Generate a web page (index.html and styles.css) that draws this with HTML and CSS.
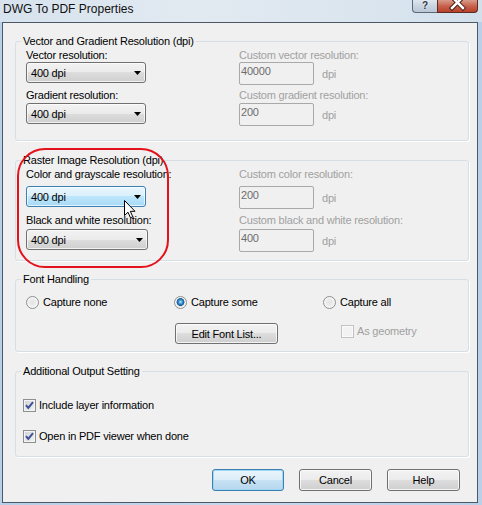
FILE: index.html
```html
<!DOCTYPE html>
<html lang="en">

<head>
    <meta charset="UTF-8" />
    <title>DWG To PDF Properties</title>
    <link rel="stylesheet" href="styles.css">
</head>

<body>
    <div class="window">
        <div class="titlebar">
            <span class="title">DWG To PDF Properties</span>
            <div class="caption">
                <span class="cap-help">?</span>
                <span class="cap-close">
                    <svg width="41" height="13" viewBox="0 0 41 13">
                        <path d="M15 -3 L26 8 M26 -3 L15 8" stroke="#4a1c14" stroke-width="4.5" stroke-linecap="square" />
                        <path d="M15 -3 L26 8 M26 -3 L15 8" stroke="#ffffff" stroke-width="2.5" stroke-linecap="square" />
                    </svg>
                </span>
            </div>
        </div>

        <div class="client">
            <!-- vector / gradient -->
            <fieldset class="group g-vector">
                <legend>Vector and Gradient Resolution (dpi)</legend>
                <div class="res-body pb-14">
                    <div class="res-row lg-0">
                        <div class="field">
                            <label>Vector resolution:</label>
                            <div class="combo"><span>400 dpi</span><i class="arrow"></i></div>
                        </div>
                        <div class="field off">
                            <label>Custom vector resolution:</label>
                            <div class="custom"><span class="textbox">40000</span><span class="unit">dpi</span></div>
                        </div>
                    </div>
                    <div class="res-row lg-1 mt-3">
                        <div class="field">
                            <label>Gradient resolution:</label>
                            <div class="combo"><span>400 dpi</span><i class="arrow"></i></div>
                        </div>
                        <div class="field off">
                            <label>Custom gradient resolution:</label>
                            <div class="custom"><span class="textbox">200</span><span class="unit">dpi</span></div>
                        </div>
                    </div>
                </div>
            </fieldset>

            <!-- raster -->
            <fieldset class="group g-raster">
                <legend>Raster Image Resolution (dpi)</legend>
                <div class="res-body pb-8">
                    <div class="res-row lg-5">
                        <div class="field">
                            <label>Color and grayscale resolution:</label>
                            <div class="combo focus"><span>400 dpi</span><i class="arrow"></i></div>
                        </div>
                        <div class="field off">
                            <label>Custom color resolution:</label>
                            <div class="custom"><span class="textbox">200</span><span class="unit">dpi</span></div>
                        </div>
                    </div>
                    <div class="res-row lg-2 mt-4">
                        <div class="field">
                            <label>Black and white resolution:</label>
                            <div class="combo wide"><span>400 dpi</span><i class="arrow"></i></div>
                        </div>
                        <div class="field off">
                            <label>Custom black and white resolution:</label>
                            <div class="custom"><span class="textbox">400</span><span class="unit">dpi</span></div>
                        </div>
                    </div>
                </div>
            </fieldset>

            <!-- fonts -->
            <fieldset class="group g-font">
                <legend>Font Handling</legend>
                <div class="font-body">
                    <div class="font-row">
                        <div class="opt"><i class="radio"></i><span>Capture none</span></div>
                        <div class="opt"><i class="radio on"></i><span>Capture some</span></div>
                        <div class="opt"><i class="radio"></i><span>Capture all</span></div>
                    </div>
                    <div class="font-row second">
                        <div></div>
                        <div><button class="btn edit">Edit Font List...</button></div>
                        <div class="opt geo off"><i class="check"></i><span>As geometry</span></div>
                    </div>
                </div>
            </fieldset>

            <!-- output -->
            <fieldset class="group g-output">
                <legend>Additional Output Setting</legend>
                <div class="out-body">
                    <div class="opt"><i class="check on"><svg width="11" height="11" viewBox="0 0 11 11"><path d="M2 5.2 L4.3 8 L9 2.2" fill="none" stroke="#3e5295" stroke-width="2" /></svg></i><span>Include layer information</span></div>
                    <div class="opt"><i class="check on"><svg width="11" height="11" viewBox="0 0 11 11"><path d="M2 5.2 L4.3 8 L9 2.2" fill="none" stroke="#3e5295" stroke-width="2" /></svg></i><span>Open in PDF viewer when done</span></div>
                </div>
            </fieldset>

            <div class="actions">
                <button class="btn default">OK</button>
                <button class="btn">Cancel</button>
                <button class="btn">Help</button>
            </div>
        </div>

        <!-- red marker and mouse pointer drawn over the dialog -->
        <div class="marker"></div>
        <svg class="pointer" width="13" height="19" viewBox="0 0 13 19">
            <path d="M0.5 0.5 L0.5 15.5 L4 12.2 L6.5 17.8 L8.8 16.8 L6.3 11.3 L11 11.3 Z" fill="#ffffff" stroke="#000000" stroke-width="1" stroke-linejoin="miter" />
        </svg>
    </div>
</body>

</html>
```

FILE: styles.css
```css
* {
    font-family: "Liberation Sans", Arial, sans-serif;
}

body {
    margin: 0;
    padding: 0;
}

.window {
    position: relative;
    width: 482px;
    height: 505px;
    background: linear-gradient(to right, #b7cfe7, #c6d9ec 50%, #b9d0e8);
    overflow: hidden;
}

/* title bar */

.titlebar {
    display: flex;
    height: 22px;
    background: linear-gradient(to right, #d6e2ed, #e2eaf1 40%, #dce6ef 70%, #d2e0ec);
}

.title {
    padding-left: 3px;
    font-size: 12px;
    line-height: 18px;
    color: #111;
}

.caption {
    display: flex;
    margin-left: auto;
    margin-right: 4px;
    align-self: flex-start;
}

.cap-help {
    width: 25px;
    height: 13px;
    box-sizing: border-box;
    border: 1px solid #5d6874;
    border-top: none;
    border-right: none;
    border-radius: 0 0 0 4px;
    background: linear-gradient(#dfe6ee, #c9d4e0 50%, #b9c7d6);
    text-align: center;
    font-size: 10px;
    font-weight: bold;
    line-height: 11px;
    color: #2b3a4e;
    text-shadow: 0 0 2px #fff;
}

.cap-close {
    width: 41px;
    height: 13px;
    box-sizing: border-box;
    border: 1px solid #5a2c24;
    border-top: none;
    border-radius: 0 0 4px 0;
    background: linear-gradient(#d99a8a, #c8614c 50%, #b9402a);
    overflow: hidden;
}

.cap-close svg {
    display: block;
    margin-left: -1px;
}

/* client area */

.client {
    margin-left: 2px;
    width: 476px;
    height: 481px;
    box-sizing: border-box;
    border: 1px solid #4c5866;
    background: #f0f0f0;
    font-size: 11px;
    letter-spacing: -0.2px;
    color: #000;
    padding-top: 11px;
}

.group {
    margin: 0 8px 0 12px;
    padding: 0;
    min-width: 0;
    border: 1px solid #d5dfe5;
    border-radius: 3px;
    box-shadow: 1px 1px 0 #ffffff;
}

.group + .group {
    margin-top: 12px;
}

.group.g-font {
    margin-top: 11px;
}

.group legend {
    margin-left: 5px;
    padding: 0 2px;
    line-height: 14px;
}

/* resolution groups */

.res-body {
    padding: 0 9px 0 10px;
}

.pb-14 {
    padding-bottom: 14px;
}

.pb-8 {
    padding-bottom: 8px;
}

.res-row {
    display: grid;
    grid-template-columns: 213px auto;
    align-items: start;
}

.mt-3 {
    margin-top: 3px;
}

.mt-4 {
    margin-top: 4px;
}

.field label {
    display: block;
    line-height: 14px;
    white-space: nowrap;
}

.lg-1 .field label {
    margin-bottom: 1px;
}

.lg-2 .field label {
    margin-bottom: 2px;
}

.lg-5 .field label {
    margin-bottom: 5px;
}

.off {
    color: #a0a0a0;
}

.combo {
    display: flex;
    align-items: center;
    width: 120px;
    height: 21px;
    box-sizing: border-box;
    padding: 1px 4px 0 4px;
    border: 1px solid #707070;
    border-radius: 3px;
    background: linear-gradient(#f2f2f2, #ebebeb 50%, #dddddd 50%, #cfcfcf);
    box-shadow: inset 0 0 0 1px rgba(255, 255, 255, 0.7);
}

.combo.wide {
    width: 122px;
}

.combo.focus {
    border-color: #3c7fb1;
    background: linear-gradient(#eaf6fd, #d9f0fc 50%, #bee6fd 50%, #a7d9f5);
}

.combo .arrow {
    margin-left: auto;
    width: 7px;
    height: 4px;
    background: #000;
    clip-path: polygon(0 0, 100% 0, 50% 100%);
}

.custom {
    display: flex;
    align-items: center;
}

.textbox {
    width: 75px;
    height: 23px;
    box-sizing: border-box;
    padding-left: 1px;
    border: 1px solid #a9a9a9;
    border-radius: 2px;
    line-height: 17px;
    color: #6d6d6d;
}

.unit {
    margin-left: 8px;
    padding-top: 1px;
}

/* font handling */

.font-body {
    padding: 9px 9px 7px 10px;
}

.font-row {
    display: grid;
    grid-template-columns: 148px 149px auto;
    align-items: start;
}

.font-row.second {
    margin-top: 14px;
}

.opt {
    display: flex;
    align-items: center;
    height: 14px;
    white-space: nowrap;
}

.radio {
    width: 13px;
    height: 13px;
    box-sizing: border-box;
    margin-right: 4px;
    border: 1px solid #8e8f8f;
    border-radius: 50%;
    background: radial-gradient(circle at 50% 50%, #e4e4e4 0, #ececec 45%, #f8f8f8 75%, #d6d6d6 100%);
    box-shadow: inset 0 0 0 1px #f6f6f6;
}

.radio.on {
    background: radial-gradient(circle at 50% 45%, #b8e4fb 0, #2e86c6 28%, #135a91 45%, #e6e6e6 52%, #f6f6f6 80%, #d6d6d6 100%);
}

.check {
    display: flex;
    align-items: center;
    justify-content: center;
    width: 13px;
    height: 13px;
    box-sizing: border-box;
    margin-right: 3px;
    border: 1px solid #8e8f8f;
    background: linear-gradient(135deg, #cfd2d6, #f4f4f4);
    box-shadow: inset 0 0 0 1px #f4f4f4;
}

.check svg {
    display: block;
}

.geo {
    margin-left: 18px;
    margin-top: 1px;
}

.geo .check {
    border-color: #c3c3c3;
    background: #f2f2f2;
    box-shadow: inset 0 0 0 1px #fafafa;
}

.btn {
    width: 73px;
    height: 22px;
    padding: 0;
    border: 1px solid #707070;
    border-radius: 3px;
    background: linear-gradient(#f2f2f2, #ebebeb 50%, #dddddd 50%, #cfcfcf);
    box-shadow: inset 0 0 0 1px rgba(255, 255, 255, 0.75);
    font-size: 11px;
    letter-spacing: -0.2px;
    color: #000;
}

.btn.edit {
    width: 103px;
    height: 21px;
    margin-left: 1px;
}

.btn.default {
    width: 72px;
    border-color: #3c7fb1;
    background: linear-gradient(#eaf5fc, #dcedf8 50%, #c7e2f4 50%, #b7d7ed);
    box-shadow: inset 0 0 0 1px #9ed7f3;
}

/* additional output */

.out-body {
    padding: 20px 9px 13px 7px;
}

.out-body .opt + .opt {
    margin-top: 17px;
}

/* dialog buttons */

.actions {
    display: flex;
    justify-content: flex-end;
    gap: 15px;
    margin: 12px 17px 0 0;
}

/* overlays */

.marker {
    position: absolute;
    left: 17px;
    top: 148px;
    width: 152px;
    height: 120px;
    box-sizing: border-box;
    border: 2px solid #e4121b;
    border-radius: 28px;
}

.pointer {
    position: absolute;
    left: 124px;
    top: 200px;
}
```
